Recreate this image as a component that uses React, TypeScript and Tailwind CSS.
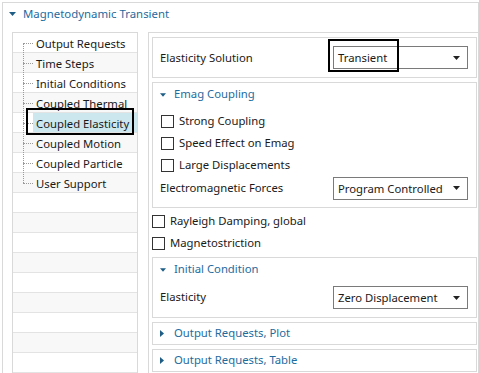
import React from "react";

const listItems = [
  "Output Requests",
  "Time Steps",
  "Initial Conditions",
  "Coupled Thermal",
  "Coupled Elasticity",
  "Coupled Motion",
  "Coupled Particle",
  "User Support",
];

function DownTri({ cls }: { cls?: string }) {
  return (
    <svg width="7" height="4" viewBox="0 0 7 4" className={cls}>
      <polygon points="0,0 7,0 3.5,4" fill="currentColor" />
    </svg>
  );
}

function RightTri() {
  return (
    <svg width="4" height="7" viewBox="0 0 4 7" className="text-[#1d5d86]">
      <polygon points="0,0 4,3.5 0,7" fill="currentColor" />
    </svg>
  );
}

function Dropdown({ value }: { value: string }) {
  return (
    <div className="w-[135px] h-[23px] border border-[#7a7a7a] bg-white flex items-center pl-[4px] pr-[7px] whitespace-nowrap">
      <span className="flex-1 leading-none pt-[1px]">{value}</span>
      <DownTri cls="text-[#222]" />
    </div>
  );
}

function Check({ label }: { label: string }) {
  return (
    <div className="h-[22px] flex items-center whitespace-nowrap">
      <div className="w-[13px] h-[13px] border border-[#333] bg-white" />
      <span className="ml-[5px]">{label}</span>
    </div>
  );
}

function GroupHeader({ label, open, tall }: { label: string; open: boolean; tall?: boolean }) {
  return (
    <div className={`${tall ? "h-[23px]" : "h-[21px]"} flex items-center pl-[7px] whitespace-nowrap`}>
      <div className="w-[8px] flex items-center">
        {open ? <DownTri cls="text-[#1d5d86] w-[6px] h-[4px]" /> : <RightTri />}
      </div>
      <span className="ml-[6px] text-[#1e6b9e]">{label}</span>
    </div>
  );
}

export default function App() {
  return (
    <div className="w-[479px] h-[373px] overflow-hidden bg-white text-[11.3px] text-[#1a1a1a] font-['Noto_Sans',sans-serif] pl-[2px] pt-[2px]">
      <div className="w-[477px] h-[380px] border-l border-t border-r border-[#d9d9d9] relative">
        <div className="h-[21px] flex items-center pl-[6px]">
          <DownTri cls="text-[#1d5d86]" />
          <span className="ml-[7px] text-[#1e6b9e] text-[11.4px]">Magnetodynamic Transient</span>
        </div>
        <div className="flex pt-[8px] pl-[9px]">
          <div className="w-[126px] h-[360px] border-l border-r border-t border-[#d9d9d9] flex flex-col">
            {Array.from({ length: 18 }).map((_, i) => {
              const label = listItems[i];
              const gray = i % 2 === 1;
              const selected = i === 4;
              return (
                <div
                  key={i}
                  className={`h-[20px] shrink-0 border-b border-[#e3e3e3] flex items-stretch whitespace-nowrap ${gray ? "bg-[#f8f8f8]" : "bg-white"}`}
                >
                  {label ? (
                    <>
                      <div className="relative w-[10px] ml-[10px] shrink-0">
                        <div
                          className={`absolute left-0 border-l border-dotted border-[#9a9a9a] ${i === 0 ? "top-[10px] -bottom-[1px]" : i === 7 ? "-top-[1px] h-[11px]" : "-top-[1px] -bottom-[1px]"}`}
                        />
                        <div className="absolute left-0 top-[10px] w-[10px] border-t border-dotted border-[#9a9a9a]" />
                      </div>
                      <div className={`flex-1 flex items-center pl-[3px] pt-[3px] ${selected ? "bg-[#cde7ef]" : ""}`}>
                        {label}
                      </div>
                    </>
                  ) : null}
                </div>
              );
            })}
          </div>
          <div className="flex-1 ml-[10px] border-l border-t border-[#d9d9d9] pl-[3px] pt-[4px] pr-[1px] flex flex-col">
            <div className="h-[41px] border border-[#d9d9d9] flex items-center pl-[7px] pr-[8px]">
              <span className="flex-1 pt-[2px]">Elasticity Solution</span>
              <Dropdown value="Transient" />
            </div>
            <div className="mt-[4px] border border-[#d9d9d9] pb-[7px]">
              <GroupHeader label="Emag Coupling" open tall />
              <div className="pl-[8px] mt-[4px]">
                <Check label="Strong Coupling" />
                <Check label="Speed Effect on Emag" />
                <Check label="Large Displacements" />
              </div>
              <div className="h-[24px] flex items-center pl-[7px] pr-[8px]">
                <span className="flex-1">Electromagnetic Forces</span>
                <Dropdown value="Program Controlled" />
              </div>
            </div>
            <div className="mt-[2px]">
              <Check label="Rayleigh Damping, global" />
              <Check label="Magnetostriction" />
            </div>
            <div className="mt-[3px] border border-[#d9d9d9] pb-[7px]">
              <GroupHeader label="Initial Condition" open tall />
              <div className="mt-[4px] h-[25px] flex items-center pl-[7px] pr-[8px]">
                <span className="flex-1">Elasticity</span>
                <Dropdown value="Zero Displacement" />
              </div>
            </div>
            <div className="mt-[4px] h-[23px] border border-[#d9d9d9]">
              <GroupHeader label="Output Requests, Plot" open={false} />
            </div>
            <div className="mt-[4px] h-[23px] border border-[#d9d9d9]">
              <GroupHeader label="Output Requests, Table" open={false} />
            </div>
          </div>
        </div>
        <div className="absolute left-[23px] top-[105px] w-[108px] h-[27px] border-2 border-black" />
        <div className="absolute left-[325px] top-[36px] w-[71px] h-[33px] border-2 border-black" />
      </div>
    </div>
  );
}
